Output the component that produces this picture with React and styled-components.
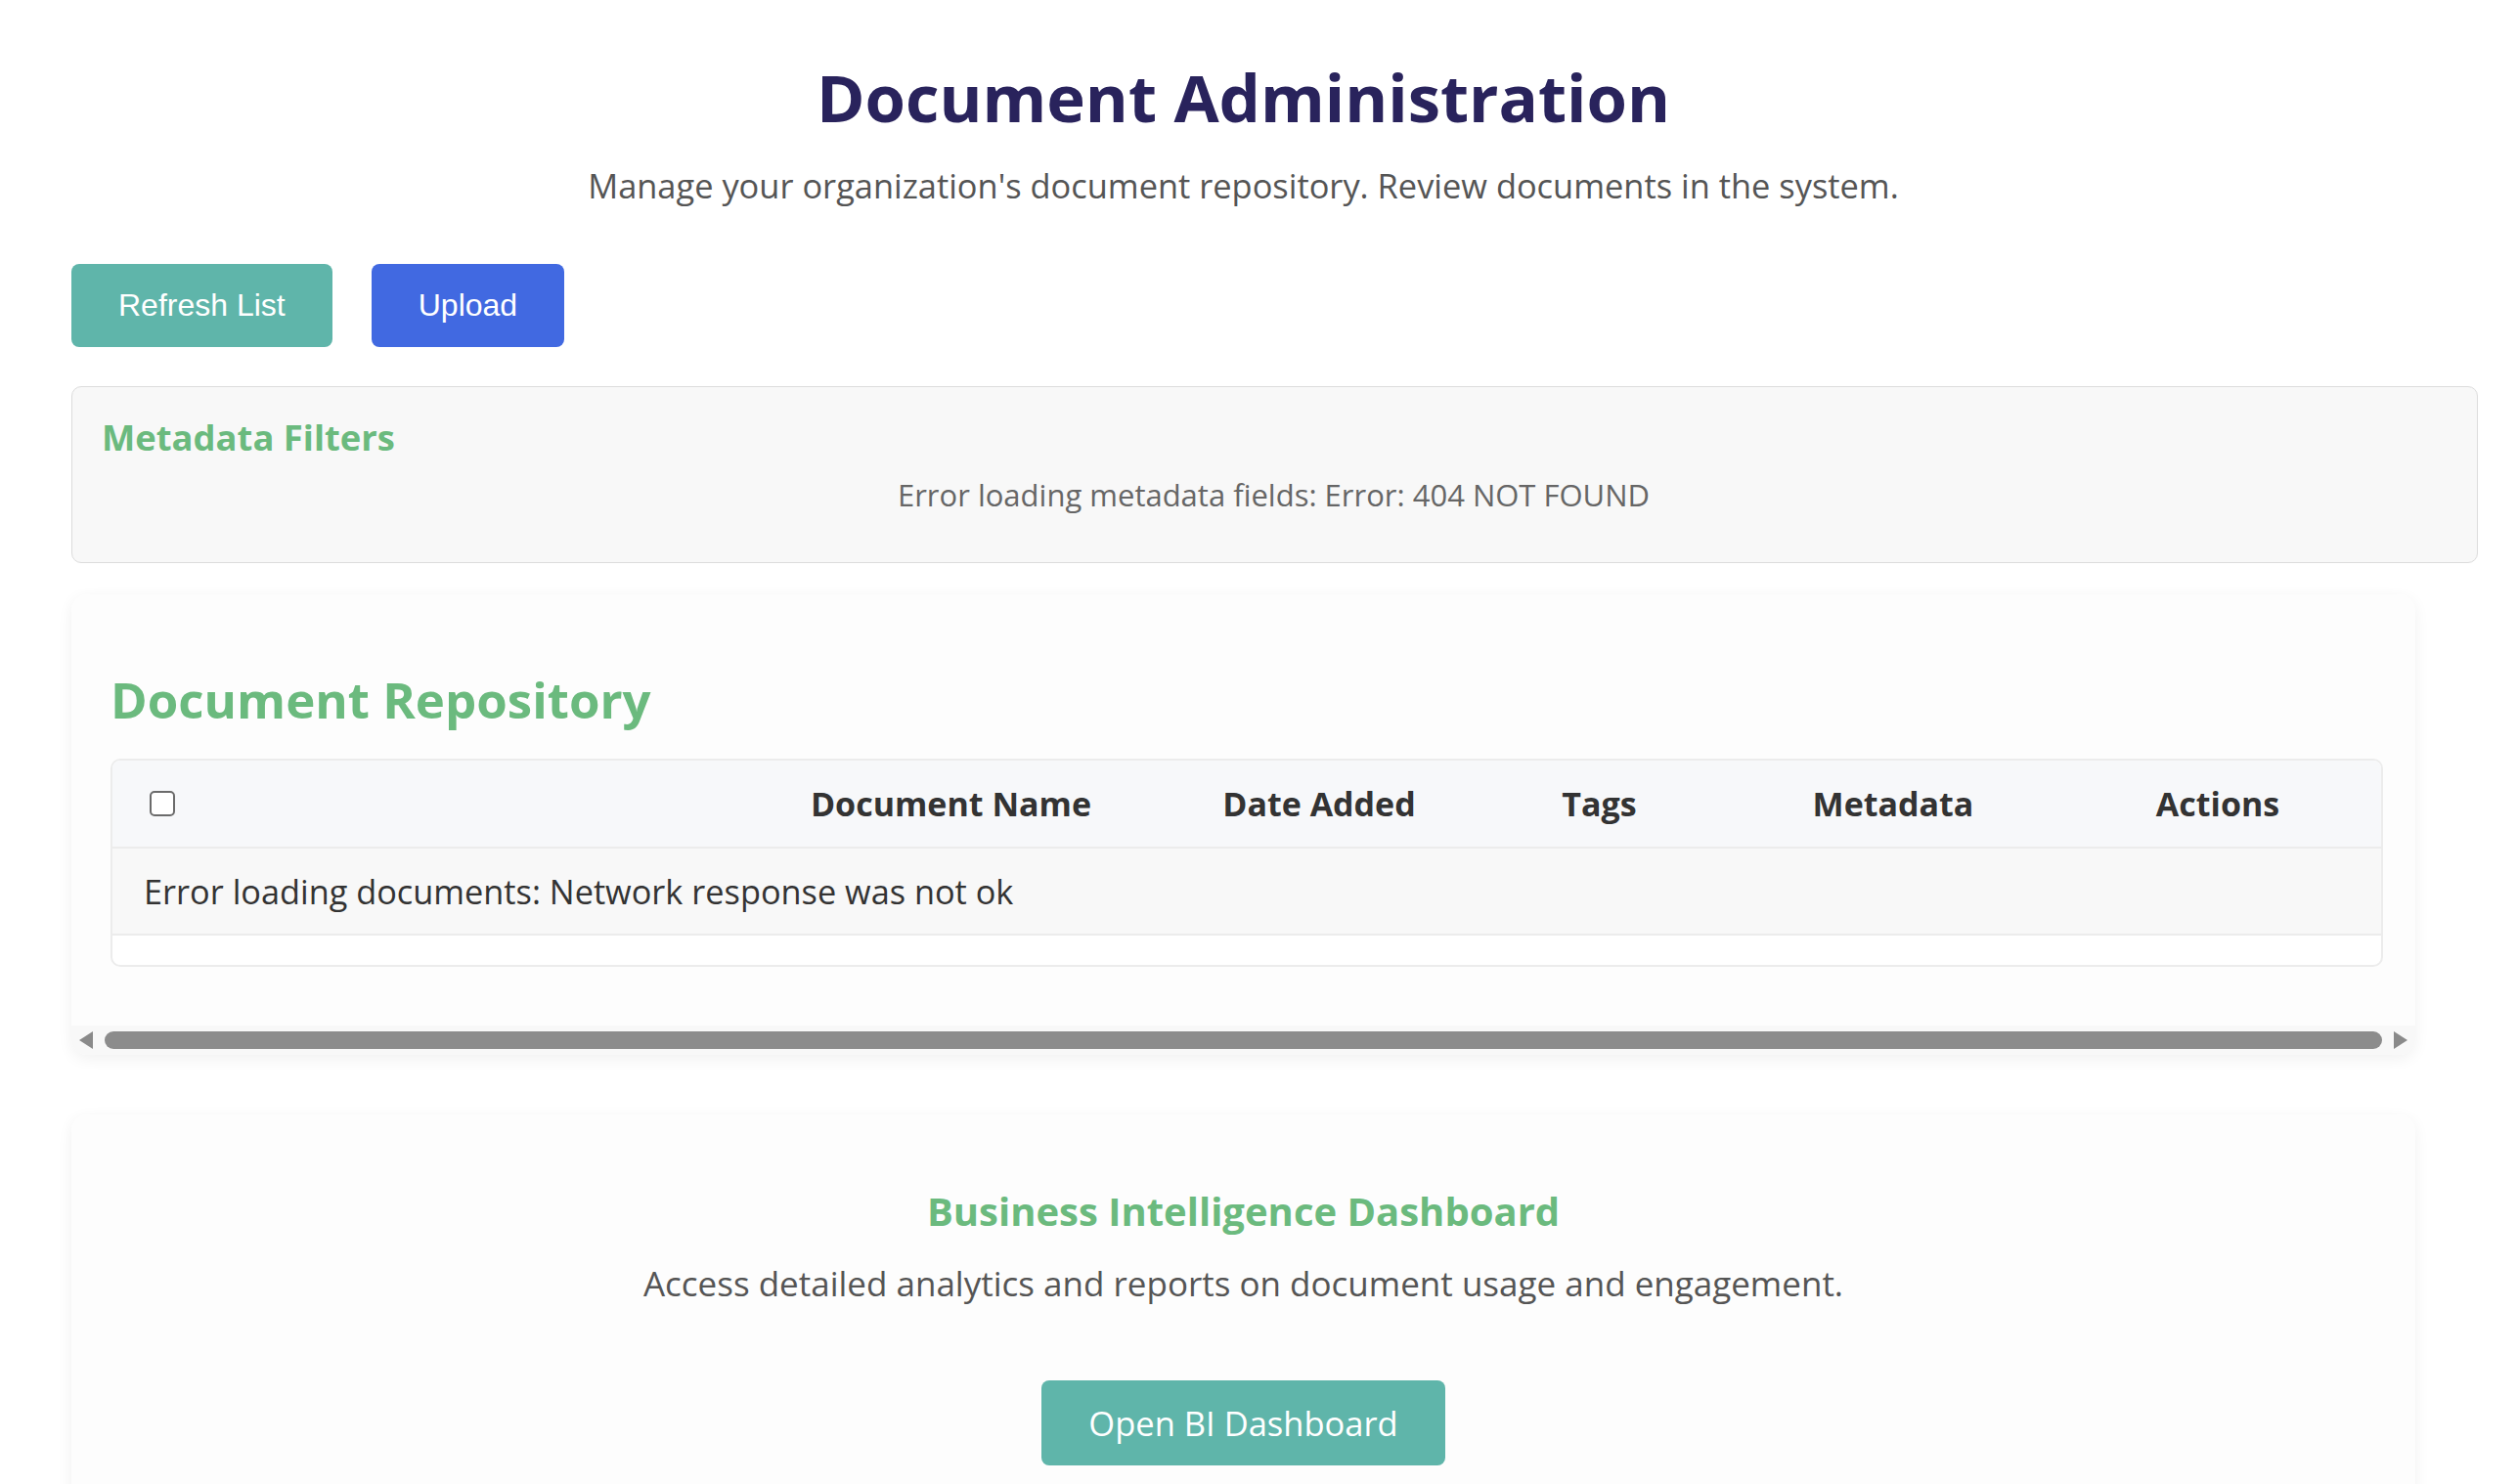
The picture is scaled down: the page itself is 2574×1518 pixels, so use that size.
import React from "react";
import styled, { createGlobalStyle } from "styled-components";

const GlobalStyle = createGlobalStyle`
  body {
    margin: 0;
    background: #ffffff;
    font-family: "Open Sans", "Noto Sans", sans-serif;
    color: #333;
  }
`;

const columns = [
  { label: "Document Name", width: 451 },
  { label: "Date Added", width: 302 },
  { label: "Tags", width: 271 },
  { label: "Metadata", width: 330 },
  { label: "Actions", width: 334 },
];

const App = () => {
  return (
    <Page>
      <GlobalStyle />
      <Header>
        <Title>Document Administration</Title>
        <Subtitle>
          Manage your organization's document repository. Review documents in the system.
        </Subtitle>
      </Header>

      <Toolbar>
        <ActionButton $color="#5fb5aa">Refresh List</ActionButton>
        <ActionButton $color="#4169e1">Upload</ActionButton>
      </Toolbar>

      <FilterBox>
        <FilterTitle>Metadata Filters</FilterTitle>
        <FilterError>Error loading metadata fields: Error: 404 NOT FOUND</FilterError>
      </FilterBox>

      <RepoCard>
        <RepoBody>
          <RepoTitle>Document Repository</RepoTitle>
          <TableFrame>
            <Table>
              <colgroup>
                <col style={{ width: 632 }} />
                {columns.map(c => (
                  <col key={c.label} style={{ width: c.width }} />
                ))}
              </colgroup>
              <thead>
                <HeadRow>
                  <CheckCell>
                    <Checkbox type="checkbox" />
                  </CheckCell>
                  {columns.map(c => (
                    <HeadCell key={c.label}>{c.label}</HeadCell>
                  ))}
                </HeadRow>
              </thead>
              <tbody>
                <ErrorRow>
                  <ErrorCell colSpan={6}>
                    Error loading documents: Network response was not ok
                  </ErrorCell>
                </ErrorRow>
              </tbody>
            </Table>
          </TableFrame>
        </RepoBody>
        <ScrollBar>
          <Arrow $dir="left" />
          <Thumb />
          <Arrow $dir="right" />
        </ScrollBar>
      </RepoCard>

      <BiCard>
        <BiTitle>Business Intelligence Dashboard</BiTitle>
        <BiText>Access detailed analytics and reports on document usage and engagement.</BiText>
        <BiButton>Open BI Dashboard</BiButton>
      </BiCard>
    </Page>
  );
};

export default App;

const green = "#6bba7e";

const Page = styled.div`
  box-sizing: border-box;
  width: 2544px;
  padding: 59px 74px 60px 73px;
`;

const Header = styled.header`
  text-align: center;
`;

const Title = styled.h1`
  margin: 0;
  font-size: 67px;
  line-height: 80px;
  font-weight: 700;
  color: #29235c;
`;

const Subtitle = styled.p`
  margin: 31px 0 0;
  font-size: 34.4px;
  line-height: 40px;
  color: #555;
`;

const Toolbar = styled.div`
  display: flex;
  gap: 40px;
  margin-top: 60px;
`;

const ActionButton = styled.button`
  font-family: "Liberation Sans", Arial, sans-serif;
  font-size: 32px;
  line-height: 37px;
  padding: 24px 48px;
  border: none;
  border-radius: 8px;
  color: #fff;
  background: ${p => p.$color};
  cursor: pointer;
`;

const FilterBox = styled.section`
  box-sizing: content-box;
  width: 100%;
  margin-top: 40px;
  padding: 29px 32px 51px 30px;
  background: #f8f8f8;
  border: 1px solid #dcdcdc;
  border-radius: 10px;
`;

const FilterTitle = styled.h3`
  margin: 0;
  font-size: 36.4px;
  line-height: 44px;
  font-weight: 700;
  color: ${green};
`;

const FilterError = styled.p`
  margin: 19px 0 0;
  text-align: center;
  font-size: 31px;
  line-height: 36px;
  color: #666;
`;

const Card = styled.section`
  background: #fdfdfd;
  border-radius: 16px;
  box-shadow: 0 4px 16px rgba(0, 0, 0, 0.06);
`;

const RepoCard = styled(Card)`
  margin-top: 32px;
  overflow: hidden;
`;

const RepoBody = styled.div`
  padding: 77px 40px 60px;
`;

const RepoTitle = styled.h2`
  margin: 0;
  font-size: 51px;
  line-height: 60px;
  font-weight: 700;
  color: ${green};
`;

const TableFrame = styled.div`
  width: 2320px;
  margin-top: 31px;
  padding-bottom: 30px;
  background: #fff;
  border: 2px solid #ececec;
  border-radius: 10px;
  overflow: hidden;
`;

const Table = styled.table`
  width: 100%;
  border-collapse: collapse;
  table-layout: fixed;
`;

const HeadRow = styled.tr`
  background: #f7f8fa;
  border-bottom: 2px solid #ececec;
`;

const HeadCell = styled.th`
  height: 88px;
  padding: 0 32px;
  text-align: center;
  font-size: 34px;
  font-weight: 700;
  color: #333;
`;

const CheckCell = styled(HeadCell)`
  text-align: left;
`;

const Checkbox = styled.input`
  appearance: none;
  display: block;
  width: 26px;
  height: 26px;
  margin: 0 0 0 6px;
  border: 2px solid #6b6b6b;
  border-radius: 5px;
  background: #fff;
`;

const ErrorRow = styled.tr`
  background: #f8f8f8;
  border-bottom: 2px solid #ececec;
`;

const ErrorCell = styled.td`
  height: 87px;
  padding: 0 32px;
  font-size: 34.3px;
  color: #333;
`;

const ScrollBar = styled.div`
  display: flex;
  align-items: center;
  gap: 12px;
  height: 30px;
  padding: 0 8px;
  background: #f8f8f8;
`;

const Arrow = styled.span`
  width: 0;
  height: 0;
  border-top: 9px solid transparent;
  border-bottom: 9px solid transparent;
  ${p =>
    p.$dir === "left"
      ? "border-right: 14px solid #8a8a8a;"
      : "border-left: 14px solid #8a8a8a;"}
`;

const Thumb = styled.div`
  flex: 1;
  height: 18px;
  border-radius: 9px;
  background: #8c8c8c;
`;

const BiCard = styled(Card)`
  margin-top: 61px;
  padding: 77px 40px 80px;
  text-align: center;
`;

const BiTitle = styled.h3`
  margin: 0;
  font-size: 40px;
  line-height: 44px;
  font-weight: 700;
  color: ${green};
`;

const BiText = styled.p`
  margin: 32px 0 0;
  font-size: 35px;
  line-height: 40px;
  color: #555;
`;

const BiButton = styled.button`
  margin-top: 79px;
  height: 87px;
  padding: 0 48px;
  font-family: inherit;
  font-size: 34.5px;
  border: none;
  border-radius: 8px;
  color: #fff;
  background: #5fb5aa;
  cursor: pointer;
`;
